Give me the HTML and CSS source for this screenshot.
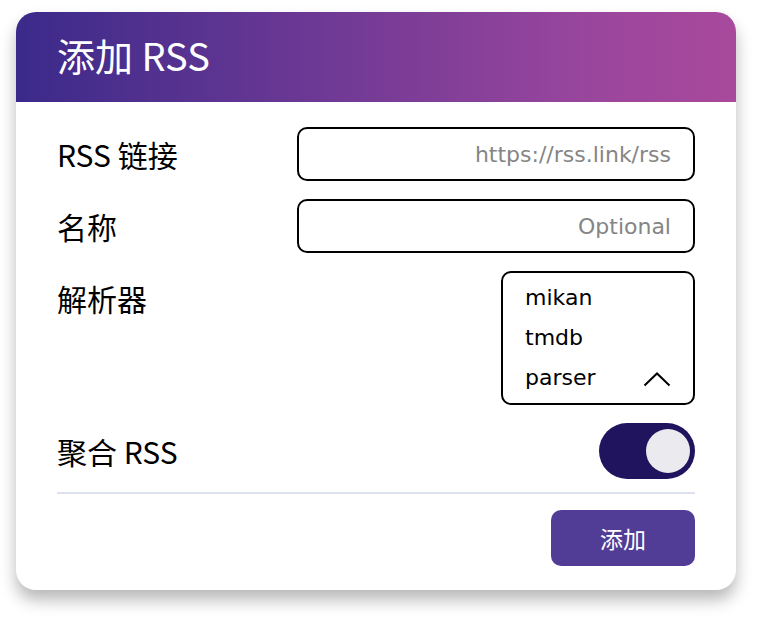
FILE: index.html
```html
<!DOCTYPE html>
<html lang="zh">
<head>
<meta charset="utf-8">
<title>添加 RSS</title>
<link rel="stylesheet" href="styles.css">
</head>
<body>
<div class="card">
  <div class="header"><h1 class="title">添加 RSS</h1></div>
  <div class="body">
    <div class="row">
      <div class="label">RSS 链接</div>
      <div class="input wide"><span class="placeholder">https://rss.link/rss</span></div>
    </div>
    <div class="row">
      <div class="label">名称</div>
      <div class="input wide"><span class="placeholder">Optional</span></div>
    </div>
    <div class="row">
      <div class="label">解析器</div>
      <div class="select">
        <div class="option">mikan</div>
        <div class="option">tmdb</div>
        <div class="option last"><span>parser</span>
          <svg class="chevron" width="28" height="16" viewBox="0 0 28 16"><polyline points="1.5,14.5 14,2.5 26.5,14.5" fill="none" stroke="#000" stroke-width="2"/></svg>
        </div>
      </div>
    </div>
    <div class="row toggle-row">
      <div class="label">聚合 RSS</div>
      <div class="toggle"><div class="knob"></div></div>
    </div>
    <div class="divider"></div>
    <div class="actions">
      <button class="btn">添加</button>
    </div>
  </div>
</div>
</body>
</html>
```
FILE: styles.css
```css
html, body {
  margin: 0;
  padding: 0;
  background: #ffffff;
}
body {
  font-family: "Noto Sans CJK SC", "Noto Sans", sans-serif;
  padding: 12px 0 30px 16px;
}
.card {
  width: 720px;
  height: 578px;
  border-radius: 20px;
  background: #fff;
  box-shadow: 0 10px 16px rgba(0, 0, 0, 0.28);
  overflow: hidden;
  display: flex;
  flex-direction: column;
}
.header {
  height: 90px;
  background: linear-gradient(90deg, #3b2a8a 0%, #6b3894 40%, #9a469d 80%, #a8499c 100%);
  display: flex;
  align-items: center;
  padding-left: 41px;
  padding-bottom: 4px;
  box-sizing: border-box;
}
.title {
  margin: 0;
  color: #fff;
  font-weight: 400;
  font-size: 38px;
  line-height: 1;
}
.body {
  padding: 25px 41px 0 41px;
  display: flex;
  flex-direction: column;
}
.row {
  display: flex;
  justify-content: space-between;
  align-items: flex-start;
  margin-bottom: 18px;
}
.label {
  font-size: 30px;
  line-height: 54px;
  height: 54px;
  color: #000;
}
.input {
  box-sizing: border-box;
  height: 54px;
  border: 2px solid #000;
  border-radius: 10px;
  display: flex;
  align-items: center;
  justify-content: flex-end;
  padding-right: 22px;
}
.wide {
  width: 398px;
}
.placeholder {
  font-family: "DejaVu Sans", sans-serif;
  font-size: 22px;
  color: #858585;
}
.select {
  box-sizing: border-box;
  width: 194px;
  height: 134px;
  border: 2px solid #000;
  border-radius: 10px;
  padding: 5px 22px 0 22px;
}
.option {
  font-family: "DejaVu Sans", sans-serif;
  font-size: 22px;
  line-height: 40px;
  height: 40px;
  color: #000;
}
.option.last {
  display: flex;
  justify-content: space-between;
  align-items: center;
}
.chevron {
  margin-top: 2px;
}
.toggle-row {
  margin-bottom: 0;
  align-items: center;
}
.toggle {
  width: 96px;
  height: 56px;
  border-radius: 28px;
  background: #20145f;
  display: flex;
  align-items: center;
  justify-content: flex-end;
  padding-right: 5px;
  box-sizing: border-box;
}
.knob {
  width: 44px;
  height: 44px;
  border-radius: 50%;
  background: #ebeaee;
}
.divider {
  height: 2px;
  background: #dde0ee;
  margin-top: 13px;
}
.actions {
  display: flex;
  justify-content: flex-end;
  margin-top: 16px;
}
.btn {
  width: 144px;
  height: 56px;
  border: none;
  border-radius: 10px;
  background: #523d96;
  color: #fff;
  font-family: "Noto Sans CJK SC", sans-serif;
  font-size: 23px;
  cursor: pointer;
}
```
